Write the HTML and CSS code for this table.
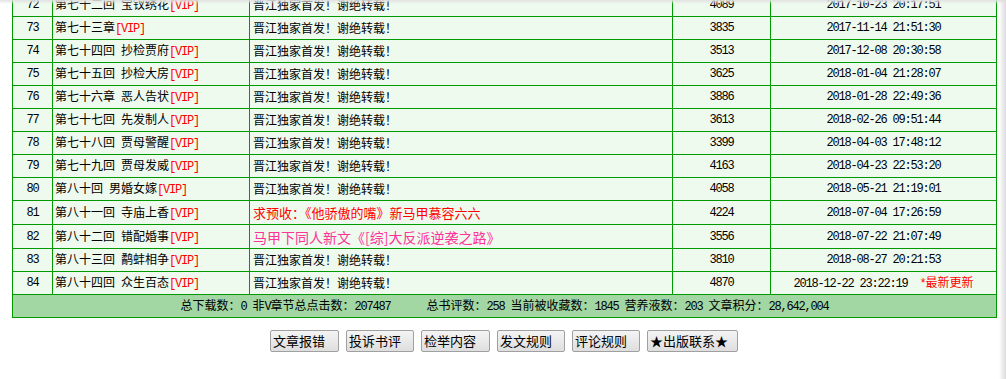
FILE: index.html
```html
<!DOCTYPE html>
<html lang="zh-CN">
<head>
<meta charset="utf-8">
<title>章节列表</title>
<link rel="stylesheet" href="styles.css">
</head>
<body>
<div class="page">
  <table class="chapters">
    <colgroup>
      <col class="c-no"><col class="c-title"><col class="c-desc"><col class="c-words"><col class="c-date">
    </colgroup>
    <tbody>
      <tr><td class="no m">72</td><td class="title">第七十二回&ensp;宝钗绣花<span class="vip m">[VIP]</span></td><td class="desc">晋江独家首发！谢绝转载！</td><td class="num m">4089</td><td class="date m">2017-10-23 20:17:51</td></tr>
      <tr><td class="no m">73</td><td class="title">第七十三章<span class="vip m">[VIP]</span></td><td class="desc">晋江独家首发！谢绝转载！</td><td class="num m">3835</td><td class="date m">2017-11-14 21:51:30</td></tr>
      <tr><td class="no m">74</td><td class="title">第七十四回&ensp;抄检贾府<span class="vip m">[VIP]</span></td><td class="desc">晋江独家首发！谢绝转载！</td><td class="num m">3513</td><td class="date m">2017-12-08 20:30:58</td></tr>
      <tr><td class="no m">75</td><td class="title">第七十五回&ensp;抄检大房<span class="vip m">[VIP]</span></td><td class="desc">晋江独家首发！谢绝转载！</td><td class="num m">3625</td><td class="date m">2018-01-04 21:28:07</td></tr>
      <tr><td class="no m">76</td><td class="title">第七十六章&ensp;恶人告状<span class="vip m">[VIP]</span></td><td class="desc">晋江独家首发！谢绝转载！</td><td class="num m">3886</td><td class="date m">2018-01-28 22:49:36</td></tr>
      <tr><td class="no m">77</td><td class="title">第七十七回&ensp;先发制人<span class="vip m">[VIP]</span></td><td class="desc">晋江独家首发！谢绝转载！</td><td class="num m">3613</td><td class="date m">2018-02-26 09:51:44</td></tr>
      <tr><td class="no m">78</td><td class="title">第七十八回&ensp;贾母警醒<span class="vip m">[VIP]</span></td><td class="desc">晋江独家首发！谢绝转载！</td><td class="num m">3399</td><td class="date m">2018-04-03 17:48:12</td></tr>
      <tr><td class="no m">79</td><td class="title">第七十九回&ensp;贾母发威<span class="vip m">[VIP]</span></td><td class="desc">晋江独家首发！谢绝转载！</td><td class="num m">4163</td><td class="date m">2018-04-23 22:53:20</td></tr>
      <tr><td class="no m">80</td><td class="title">第八十回&ensp;男婚女嫁<span class="vip m">[VIP]</span></td><td class="desc">晋江独家首发！谢绝转载！</td><td class="num m">4058</td><td class="date m">2018-05-21 21:19:01</td></tr>
      <tr class="tall"><td class="no m">81</td><td class="title">第八十一回&ensp;寺庙上香<span class="vip m">[VIP]</span></td><td class="desc red">求预收：《他骄傲的嘴》新马甲慕容六六</td><td class="num m">4224</td><td class="date m">2018-07-04 17:26:59</td></tr>
      <tr class="tall"><td class="no m">82</td><td class="title">第八十二回&ensp;错配婚事<span class="vip m">[VIP]</span></td><td class="desc pink">马甲下同人新文《[综]大反派逆袭之路》</td><td class="num m">3556</td><td class="date m">2018-07-22 21:07:49</td></tr>
      <tr><td class="no m">83</td><td class="title">第八十三回&ensp;鹬蚌相争<span class="vip m">[VIP]</span></td><td class="desc">晋江独家首发！谢绝转载！</td><td class="num m">3810</td><td class="date m">2018-08-27 20:21:53</td></tr>
      <tr><td class="no m">84</td><td class="title">第八十四回&ensp;众生百态<span class="vip m">[VIP]</span></td><td class="desc">晋江独家首发！谢绝转载！</td><td class="num m">4870</td><td class="date"><span class="m">2018-12-22 23:22:19&nbsp;&nbsp;</span><span class="latest"><span class="m">*</span>最新更新</span></td></tr>
      <tr class="summary"><td colspan="5">总下载数：<span class="m">0 </span>非<span class="m">V</span>章节总点击数：<span class="m">207487&nbsp;&nbsp;&nbsp;&nbsp;&nbsp; </span>总书评数：<span class="m">258 </span>当前被收藏数：<span class="m">1845 </span>营养液数：<span class="m">203 </span>文章积分：<span class="m">28,642,004</span></td></tr>
    </tbody>
  </table>
  <div class="actions">
    <button class="btn w69">文章报错</button>
    <button class="btn w68">投诉书评</button>
    <button class="btn w69">检举内容</button>
    <button class="btn w68">发文规则</button>
    <button class="btn w68">评论规则</button>
    <button class="btn w91">★出版联系★</button>
  </div>
</div>
<div class="top-shade"></div>
<div class="side-shade"></div>
</body>
</html>
```

FILE: styles.css
```css
html, body {
  margin: 0;
  padding: 0;
  background: #ffffff;
  overflow: hidden;
}

body {
  font-family: "Noto Sans CJK SC", "Liberation Sans", sans-serif;
  font-size: 12px;
  color: #000;
}

.page {
  width: 984px;
  margin: -7px 0 0 12px;
}

.chapters {
  width: 984px;
  table-layout: fixed;
  border-collapse: collapse;
  border: 1px solid #009900;
}

.c-no { width: 40px; }
.c-title { width: 197px; }
.c-desc { width: 423px; }
.c-words { width: 98px; }
.c-date { width: 226px; }

.chapters td {
  border: 1px solid #009900;
  background: #effaef;
  height: 22px;
  padding: 0;
  line-height: 16px;
  white-space: nowrap;
  overflow: hidden;
}

.chapters tr.tall td {
  height: 23px;
}

.m {
  font-family: "Liberation Mono", monospace;
  letter-spacing: -1.2px;
}

.no, .num, .date {
  text-align: center;
}

.title {
  padding-left: 2px !important;
}

.desc {
  padding-left: 3px !important;
}

.vip {
  color: #ff0000;
}

.red {
  color: #ff0000;
  font-size: 13px;
}

.pink {
  color: #ff3399;
  font-size: 14px;
}

.latest {
  color: #ff0000;
}

.summary td {
  background: #a2d6a2;
  text-align: center;
  height: 22px;
}

.actions {
  display: flex;
  justify-content: center;
  gap: 7px;
  margin-top: 12px;
}

.btn {
  height: 22px;
  padding: 0 0 0 2px;
  text-align: left;
  font-family: "Noto Sans CJK SC", "Liberation Sans", sans-serif;
  font-size: 13px;
  line-height: 18px;
  color: #000;
  border: 1px solid #a0a0a0;
  border-radius: 2px;
  background: linear-gradient(#f4f4f4, #dedede);
}

.w68 { width: 68px; }
.w69 { width: 69px; }
.w91 { width: 91px; }

.top-shade {
  position: fixed;
  left: 0;
  top: 0;
  right: 0;
  height: 4px;
  background: linear-gradient(#e2e2e2, rgba(255,255,255,0));
}

.side-shade {
  position: fixed;
  top: 0;
  right: 0;
  bottom: 0;
  width: 7px;
  background: linear-gradient(to right, rgba(255,255,255,0), #dcdcdc);
}
```
